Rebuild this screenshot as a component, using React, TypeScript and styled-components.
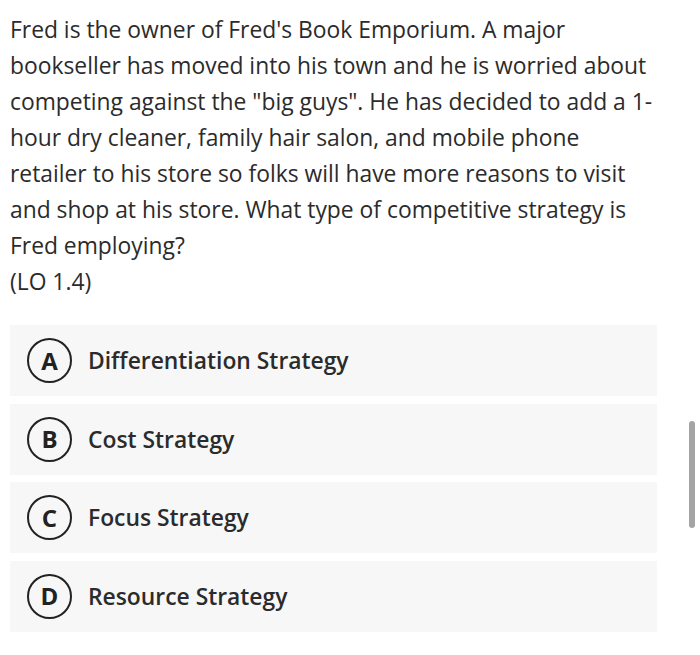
import React from "react";
import styled, { createGlobalStyle } from "styled-components";

const GlobalStyle = createGlobalStyle`
  html, body {
    margin: 0;
    padding: 0;
    background: #ffffff;
  }
  body {
    font-family: "Open Sans", "Noto Sans", sans-serif;
    color: #2b2b2b;
  }
`;

const Page = styled.div`
  position: relative;
  width: 700px;
  height: 655px;
  overflow: hidden;
  background: #ffffff;
`;

const Content = styled.div`
  display: flex;
  flex-direction: column;
  width: 647px;
  padding: 12px 0 0 10px;
`;

const Question = styled.p`
  margin: 0;
  font-size: 22.85px;
  line-height: 36px;
  color: #2b2b2b;
`;

const Options = styled.div`
  display: flex;
  flex-direction: column;
  gap: 7.5px;
  margin-top: 25px;
`;

const Option = styled.div`
  display: flex;
  align-items: center;
  gap: 16px;
  height: 71px;
  padding-left: 17px;
  background: #f7f7f7;
`;

const Badge = styled.span`
  display: flex;
  align-items: center;
  justify-content: center;
  box-sizing: border-box;
  width: 45px;
  height: 45px;
  border: 2.6px solid #222222;
  border-radius: 50%;
  font-size: 24px;
  font-weight: 700;
  color: #222222;
  line-height: 1;
`;

const Label = styled.span`
  font-size: 22.85px;
  font-weight: 600;
  color: #2b2b2b;
`;

const Scrollbar = styled.div`
  position: absolute;
  left: 689px;
  top: 421px;
  width: 6px;
  height: 107px;
  border-radius: 3px;
  background: #a4a4a4;
`;

const options = [
  { key: "A", label: "Differentiation Strategy" },
  { key: "B", label: "Cost Strategy" },
  { key: "C", label: "Focus Strategy" },
  { key: "D", label: "Resource Strategy" },
];

export default function App() {
  return (
    <Page>
      <GlobalStyle />
      <Content>
        <Question>
          Fred is the owner of Fred's Book Emporium. A major bookseller has
          moved into his town and he is worried about competing against the
          "big guys". He has decided to add a 1-hour dry cleaner, family hair
          salon, and mobile phone retailer to his store so folks will have more
          reasons to visit and shop at his store. What type of competitive
          strategy is Fred employing?
          <br />
          (LO 1.4)
        </Question>
        <Options>
          {options.map((o) => (
            <Option key={o.key}>
              <Badge>{o.key}</Badge>
              <Label>{o.label}</Label>
            </Option>
          ))}
        </Options>
      </Content>
      <Scrollbar />
    </Page>
  );
}
